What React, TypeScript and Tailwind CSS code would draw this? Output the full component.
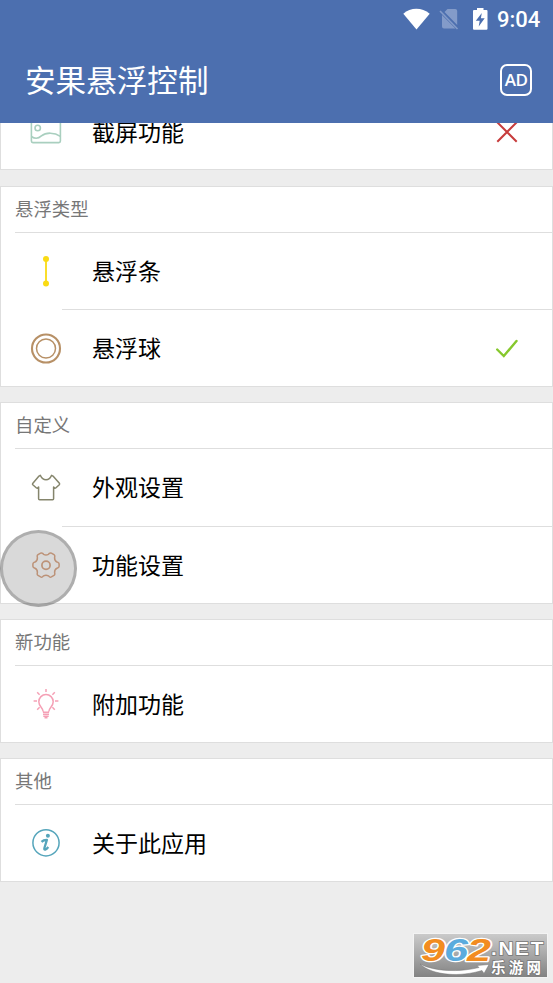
import React from 'react';

interface Item {
  label: string;
  icon: React.ReactNode;
  state?: 'on' | 'off';
  height?: string;
  labelPad?: string;
}

interface Group {
  title: string;
  items: Item[];
}

const ImageIcon = () => (
  <svg width="32" height="32" viewBox="0 0 32 32" fill="none" stroke="#a9cfbf" strokeWidth="1.6">
    <rect x="1.4" y="4" width="29" height="23.6" rx="1.5" />
    <circle cx="7.7" cy="13" r="2.7" />
    <path d="M1.4 21.5c4 2.8 7 2.200 10-.6 4.500-3.700 13-3.700 19 .4" />
  </svg>
);

const BarIcon = () => (
  <svg width="32" height="32" viewBox="0 0 32 32" fill="#fadb14">
    <rect x="15.100" y="4" width="1.800" height="24" />
    <circle cx="16" cy="4" r="3" />
    <circle cx="16" cy="28.500" r="3" />
  </svg>
);

const BallIcon = () => (
  <svg width="32" height="32" viewBox="0 0 32 32" fill="none" stroke="#b79066">
    <circle cx="16" cy="16.500" r="14" strokeWidth="2.100" />
    <circle cx="16" cy="16.500" r="9.500" strokeWidth="1.500" />
  </svg>
);

const ShirtIcon = () => (
  <svg width="32" height="32" viewBox="0 0 32 32" fill="none" stroke="#85856c" strokeWidth="1.500" strokeLinejoin="round">
    <path d="M10.300 3.300 9 4.100 2.700 11.400q-.5.700.1 1.300l3.700 3.300q.7.500 1.300-.1l.8-.8v11.700q0 1 1 1h13q1 0 1-1V15.100l.8.8q.6.600 1.300.1l3.600-3.300q.6-.7.100-1.400L23 4.100l-1.400-.8c-1.300 3.200-3 4.500-5.600 4.500s-4.300-1.300-5.700-4.500Z" />
  </svg>
);

const GearIcon = () => (
  <svg width="32" height="32" viewBox="0 0 32 32" fill="none" stroke="#d69a74" strokeWidth="1.500" strokeLinejoin="round">
    <path d="M13.600 5.300Q16 6.600 18.400 5.300L19.400 4.400Q20.300 3.600 21.400 4.200L24 5.700Q25 6.400 24.800 7.500L24.600 8.700Q24.500 11.800 27 13L28 13.400Q29.100 13.900 29.100 15V17.200Q29.100 18.300 28 18.800L27 19.200Q24.500 20.400 24.600 23.400L24.800 24.600Q25 25.700 24 26.400L21.400 27.900Q20.300 28.500 19.400 27.700L18.400 26.800Q16 25.500 13.600 26.800L12.600 27.700Q11.700 28.500 10.600 27.900L8 26.400Q7 25.700 7.200 24.600L7.400 23.400Q7.500 20.400 5 19.200L4 18.800Q2.900 18.300 2.900 17.200V15Q2.900 13.900 4 13.400L5 13Q7.500 11.800 7.400 8.700L7.200 7.500Q7 6.400 8 5.700L10.600 4.200Q11.700 3.600 12.600 4.400Z" />
    <circle cx="16" cy="16.200" r="4.100" strokeWidth="1.700" />
  </svg>
);

const BulbIcon = () => (
  <svg width="32" height="32" viewBox="0 0 32 32" fill="none" stroke="#f5a0b5" strokeWidth="1.500">
    <path d="M13.100 23.500c0-4-4.300-4.800-4.300-9.800a7.200 7.200 0 0 1 14.400 0c0 5-4.300 5.800-4.300 9.800M12.900 24.200h6.200M13 26.300h6M13.300 28.300h5.400M14.500 29.800h3" />
    <path d="M16 1v3M3.600 13H7M25 13h3.400M7.200 4.300l2.400 2.400M24.800 4.300l-2.400 2.400M7.200 21.700l2.400-2.400M24.800 21.700l-2.400-2.400" />
  </svg>
);

const InfoIcon = () => (
  <svg width="32" height="32" viewBox="0 0 32 32" fill="none" stroke="#55a5bb">
    <circle cx="16" cy="15.800" r="13.100" strokeWidth="1.500" />
    <circle cx="17.900" cy="8.800" r="2" fill="#55a5bb" stroke="none" />
    <path d="M11.500 14.800c1.500-1.400 3.200-2 5.400-1.900L14.400 21c-.7 2.600 1.700 1.800 3.900-1" strokeWidth="2.300" strokeLinejoin="round" />
  </svg>
);

const groups: Group[] = [
  {
    title: '悬浮类型',
    items: [
      { label: '悬浮条', icon: <BarIcon /> },
      { label: '悬浮球', icon: <BallIcon />, state: 'on' },
    ],
  },
  {
    title: '自定义',
    items: [
      { label: '外观设置', icon: <ShirtIcon />, height: 'h-[77px]', labelPad: 'pb-[3px]' },
      { label: '功能设置', icon: <GearIcon /> },
    ],
  },
  { title: '新功能', items: [{ label: '附加功能', icon: <BulbIcon /> }] },
  { title: '其他', items: [{ label: '关于此应用', icon: <InfoIcon /> }] },
];

const Row: React.FC<Item> = ({ label, icon, state, height = 'h-[76px]', labelPad = 'pb-[2px]' }) => (
  <div className={`flex items-center pl-[29px] pr-[33px] ${height}`}>
    <div className="h-8 w-8 shrink-0">{icon}</div>
    <span className={`ml-[30px] flex-1 text-[23px] leading-8 text-black ${labelPad}`}>{label}</span>
    {state === 'on' && (
      <svg width="24" height="24" viewBox="0 0 24 24" fill="none" stroke="#86c82d" strokeWidth="2.400" strokeLinecap="round">
        <path d="m2.200 13.500 6.600 6.500L21.500 5" />
      </svg>
    )}
    {state === 'off' && (
      <svg width="24" height="24" viewBox="0 0 24 24" fill="none" stroke="#c73c3c" strokeWidth="2">
        <path d="m2.300 3.300 19.400 19.400M21.700 3.300 2.300 22.700" />
      </svg>
    )}
  </div>
);

const StatusBar = () => (
  <div className="flex h-[38px] items-center justify-end pr-[12px] text-white">
    <svg width="28" height="23" viewBox="0 0 28 23" fill="currentColor">
      <path d="M.3 5.700C7.500-1 19-1 26.700 5.700L13.500 21.500Z" />
    </svg>
    <svg className="ml-[7px]" width="22" height="23" viewBox="0 0 22 23">
      <path d="M9.500 1h7.700q2 0 2 2v14L6.500 4ZM4 7l13.500 13.500H6q-2 0-2-2Z" fill="#839bc9" />
      <path d="m2 3 17.500 18" stroke="#839bc9" strokeWidth="1.600" />
    </svg>
    <svg className="ml-[12px]" width="17" height="23" viewBox="0 0 17 23">
      <path d="M5 .1h6.500v2H14.500q1 0 1 1V20.800q0 1-1 1H2q-1 0-1-1V3.100q0-1 1-1H5Z" fill="white" />
      <path d="M9.800 5 3.800 12.700h3.900l-1 5.800 6-8.200H8.900Z" fill="#4c6faf" />
    </svg>
    <span className="ml-[8px] w-[44px] pt-px text-[22px] font-medium leading-6 font-[Roboto,sans-serif]">9:04</span>
  </div>
);

const Watermark = () => (
  <svg className="absolute left-[413px] top-[933px]" width="135" height="45" viewBox="0 0 135 45">
    <defs>
      <linearGradient id="plate" x1="0" y1="0" x2="0" y2="1">
        <stop offset="0" stopColor="#cbcbcb" />
        <stop offset="1" stopColor="#828282" />
      </linearGradient>
    </defs>
    <rect x="0.500" y="0.500" width="134" height="44" fill="url(#plate)" stroke="#f3f3f3" />
    <g fontFamily="Liberation Sans, sans-serif" fontWeight="bold" fontStyle="italic" fontSize="32" stroke="white" strokeWidth="2.500" paintOrder="stroke" strokeLinejoin="round">
      <text x="8" y="27.500" textLength="24" lengthAdjust="spacingAndGlyphs" fill="#f28c20">9</text>
      <text x="31" y="27.500" textLength="24" lengthAdjust="spacingAndGlyphs" fill="#5babdd">6</text>
      <text x="54" y="27.500" textLength="24" lengthAdjust="spacingAndGlyphs" fill="#f28c20">2</text>
    </g>
    <text x="78" y="21.500" textLength="54" lengthAdjust="spacingAndGlyphs" fontFamily="Liberation Sans, sans-serif" fontWeight="bold" fontSize="18" letterSpacing="1.500" fill="white" stroke="#777" strokeWidth="1.500" paintOrder="stroke">.NET</text>
    <text x="78" y="39.500" textLength="50" lengthAdjust="spacing" fontFamily="Noto Sans CJK SC, sans-serif" fontWeight="bold" fontSize="14.500" fill="white" stroke="#777" strokeWidth="1.500" paintOrder="stroke">乐游网</text>
    <path d="M7 31c14 7.500 39 8.500 59 3.500l-2-2 12-1-5 9-2-3C48 44 20 43 7 31Z" fill="white" stroke="#777" strokeWidth=".5" />
  </svg>
);

export default function App() {
  return (
    <div className="relative h-[983px] w-[553px] overflow-hidden bg-[#ededed] font-['Noto_Sans_CJK_SC',sans-serif]">
      <header className="h-[123px] bg-[#4c6faf]">
        <StatusBar />
        <div className="flex h-[83px] items-center justify-between pl-[25px] pr-[21px]">
          <h1 className="pb-[2px] text-[30.600px] leading-10 text-white">安果悬浮控制</h1>
          <div className="flex h-8 w-8 items-center justify-center rounded-[7px] border-2 border-white pb-px font-['Open_Sans',sans-serif] text-[17px] font-semibold leading-none tracking-[-0.5px] text-white">
            AD
          </div>
        </div>
      </header>

      <main>
        <div className="h-[47px] overflow-hidden">
          <div className="-mt-[30px] border border-t-0 border-[#dedede] bg-white">
            <Row label="截屏功能" icon={<ImageIcon />} state="off" labelPad="pb-0" />
          </div>
        </div>
        <div className="mt-4 flex flex-col gap-[15px]">
          {groups.map((group) => (
            <section key={group.title} className="border border-[#dedede] bg-white">
              <h2 className="flex h-[45px] items-center pb-[3px] pl-3.5 text-[18.400px] leading-6 text-[#777777]">{group.title}</h2>
              {group.items.map((item, index) => (
                <div key={item.label}>
                  <div className={`h-px bg-[#dedede] ${index === 0 ? 'ml-3.5' : 'ml-[61px]'}`} />
                  <Row {...item} />
                </div>
              ))}
            </section>
          ))}
        </div>
      </main>

      {/* floating ball */}
      <div className="absolute left-0 top-[530px] h-[77px] w-[77px] rounded-full border-[3px] border-black/20 bg-[#808080]/30" />
      <Watermark />
    </div>
  );
}
